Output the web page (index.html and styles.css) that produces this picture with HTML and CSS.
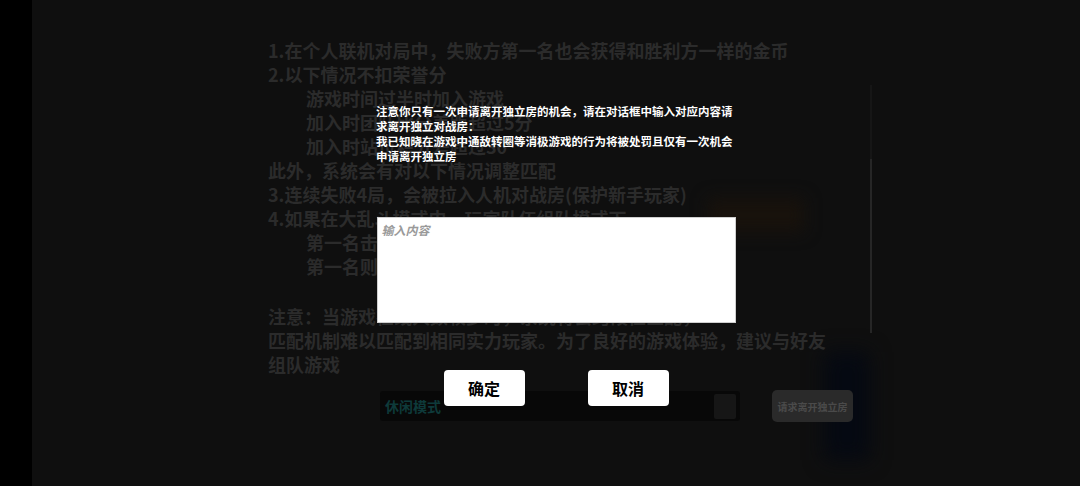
FILE: index.html
```html
<!DOCTYPE html>
<html lang="zh-CN">
<head>
<meta charset="utf-8">
<title>独立房</title>
<link rel="stylesheet" href="styles.css">
</head>
<body>
<div class="screen">
  <div class="notch-strip"></div>
  <main class="stage">
    <section class="rules">
      <div class="glow-orange"></div>
      <div class="glow-blue"></div>
      <div class="scroll-track"><div class="scroll-thumb"></div></div>
      <div class="rules-text">
        <div class="ln">1.在个人联机对局中，失败方第一名也会获得和胜利方一样的金币</div>
        <div class="ln">2.以下情况不扣荣誉分</div>
        <div class="ln ind">游戏时间过半时加入游戏</div>
        <div class="ln ind">加入时团队比分差距超过5分</div>
        <div class="ln ind">加入时站位积分差超过30</div>
        <div class="ln">此外，系统会有对以下情况调整匹配</div>
        <div class="ln">3.连续失败4局，会被拉入人机对战房(保护新手玩家)</div>
        <div class="ln">4.如果在大乱斗模式中，玩家队伍组队模式下</div>
        <div class="ln ind">第一名击杀数最多的玩家</div>
        <div class="ln ind">第一名则获得更多的金币</div>
        <div class="ln blank"></div>
        <div class="ln">注意：当游戏在线人数较少时，系统将会跨段位匹配，</div>
        <div class="ln">匹配机制难以匹配到相同实力玩家。为了良好的游戏体验，建议与好友</div>
        <div class="ln">组队游戏</div>
      </div>
      <div class="mode-row">
        <div class="mode-bar">
          <span class="mode-name">休闲模式</span>
          <span class="mode-box"></span>
        </div>
        <button class="leave-btn">请求离开独立房</button>
      </div>
    </section>

    <div class="modal">
      <div class="dialog">
        <p class="dialog-text">注意你只有一次申请离开独立房的机会，请在对话框中输入对应内容请求离开独立对战房：</p>
        <p class="dialog-text">我已知晓在游戏中通敌转圈等消极游戏的行为将被处罚且仅有一次机会申请离开独立房</p>
        <textarea class="dialog-input" placeholder="输入内容"></textarea>
        <div class="dialog-actions">
          <button class="dlg-btn">确定</button>
          <button class="dlg-btn">取消</button>
        </div>
      </div>
    </div>
  </main>
</div>
</body>
</html>
```
FILE: styles.css
```css
* { box-sizing: border-box; }
html, body {
  margin: 0;
  padding: 0;
  background: #000;
}
body {
  width: 1080px;
  height: 486px;
  overflow: hidden;
  font-family: "Noto Sans CJK SC", "Noto Sans", sans-serif;
}
.screen {
  display: flex;
  width: 1080px;
  height: 486px;
}
.notch-strip {
  width: 32px;
  flex: none;
  background: #000;
}
.stage {
  position: relative;
  flex: 1;
  background: #0f0f0f;
  overflow: hidden;
}

/* dimmed background content */
.rules {
  position: relative;
  padding: 38px 0 0 236px;
  height: 100%;
}
.rules-text {
  position: relative;
  color: #2b2b2b;
  font-size: 18px;
  font-weight: 700;
  line-height: 24px;
  white-space: nowrap;
}
.ln.ind { padding-left: 38px; }
.ln.blank { height: 26px; }

.scroll-track {
  position: absolute;
  left: 838px;
  top: 85px;
  width: 2px;
  height: 248px;
  background: #161616;
}
.scroll-thumb {
  margin-top: 74px;
  height: 174px;
  background: #262626;
}
.glow-orange {
  position: absolute;
  left: 676px;
  top: 198px;
  width: 96px;
  height: 34px;
  background: #18120c;
  filter: blur(8px);
}
.glow-blue {
  position: absolute;
  left: 792px;
  top: 352px;
  width: 46px;
  height: 108px;
  background: #050912;
  filter: blur(10px);
}

.mode-row {
  position: relative;
  display: flex;
  align-items: center;
  gap: 32px;
  margin: 14px 0 0 112px;
}
.mode-bar {
  width: 360px;
  height: 30px;
  background: #080808;
  border-radius: 3px;
  display: flex;
  align-items: center;
  justify-content: space-between;
  padding: 0 4px 0 5px;
}
.mode-name {
  color: #0e3a3a;
  font-size: 14px;
  font-weight: 700;
}
.mode-box {
  width: 22px;
  height: 25px;
  background: #161616;
  border-radius: 2px;
}
.leave-btn {
  width: 81px;
  height: 32px;
  border: none;
  border-radius: 5px;
  background: #2a2a2a;
  color: #4a4a4a;
  font-family: "Noto Sans CJK SC", sans-serif;
  font-size: 10px;
  font-weight: 700;
  padding: 0;
}

/* modal overlay */
.modal {
  position: absolute;
  inset: 0;
  display: flex;
  justify-content: center;
}
.dialog {
  width: 360px;
  padding-top: 104px;
  display: flex;
  flex-direction: column;
  align-items: center;
}
.dialog-text {
  margin: 0;
  width: 360px;
  color: #fff;
  font-size: 11.5px;
  font-weight: 700;
  line-height: 15px;
}
.dialog-input {
  display: block;
  margin-top: 53px;
  width: 359px;
  height: 106px;
  border: 1px solid #cfcfcf;
  background: #fff;
  resize: none;
  padding: 3px 4px;
  font-family: "Noto Sans CJK SC", sans-serif;
  font-size: 12px;
  font-weight: 700;
  outline: none;
}
.dialog-input::placeholder {
  color: #9a9a9a;
  font-style: italic;
}
.dialog-actions {
  display: flex;
  gap: 63px;
  margin-top: 47px;
}
.dlg-btn {
  width: 81px;
  height: 36px;
  border: none;
  border-radius: 4px;
  background: #fff;
  color: #000;
  font-family: "Noto Sans CJK SC", sans-serif;
  font-size: 16px;
  font-weight: 700;
  padding: 0;
}
```
